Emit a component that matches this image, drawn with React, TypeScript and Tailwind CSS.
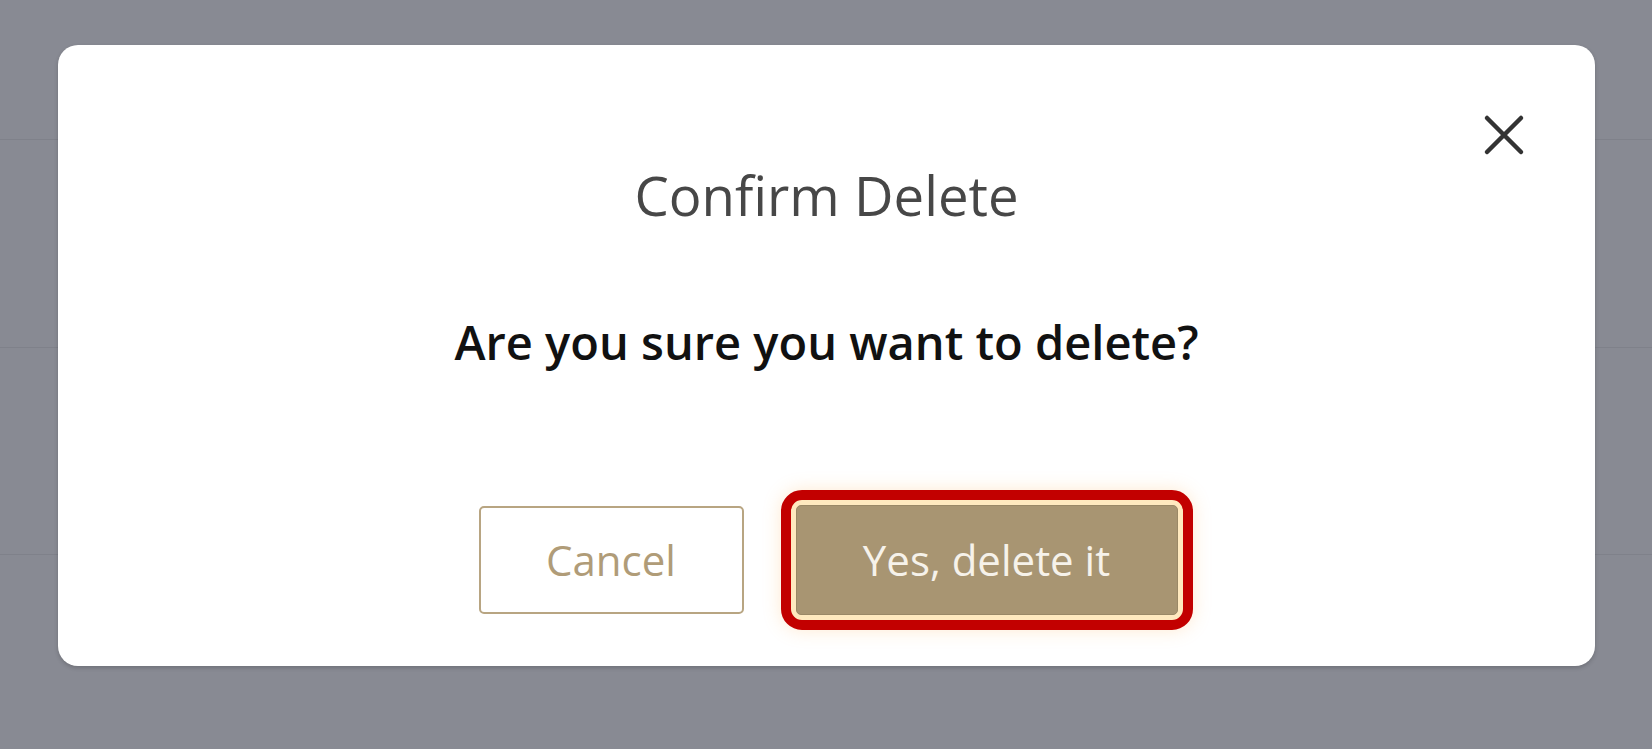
import { useState } from "react";

const rows = ["h-[140px]", "h-[208px]", "h-[207px]"];

function CloseIcon() {
  return (
    <svg width="42" height="42" viewBox="0 0 42 42" fill="none" aria-hidden="true">
      <path d="M4 4L38 38M38 4L4 38" stroke="#333333" strokeWidth="4.5" strokeLinecap="round" />
    </svg>
  );
}

export default function App() {
  const [open, setOpen] = useState(true);

  return (
    <div className="relative h-[749px] w-full overflow-hidden bg-[#888a93] font-['Open_Sans',sans-serif]">
      {/* table rows dimmed behind the backdrop */}
      <div className="flex flex-col">
        {rows.map((h, i) => (
          <div key={i} className={`${h} border-b border-[#7f818a]`} />
        ))}
      </div>

      {open ? (
        <div className="absolute left-[58px] top-[45px] flex h-[621px] w-[1537px] flex-col items-center rounded-[20px] bg-white shadow-[0_2px_4px_rgba(0,0,0,0.18)]">
          <button
            type="button"
            aria-label="Close"
            className="absolute right-[70px] top-[69px] flex h-[42px] w-[42px] items-center justify-center"
            onClick={() => setOpen(false)}
          >
            <CloseIcon />
          </button>

          <h2 className="pt-[123px] text-[54.5px] font-normal leading-none text-[#474747]">Confirm Delete</h2>

          <p className="mt-[96px] text-[47px] font-semibold leading-none text-[#111111]">
            Are you sure you want to delete?
          </p>

          <div className="ml-[18px] mt-[124px] flex items-center gap-[37px]">
            <button
              type="button"
              className="flex h-[108px] w-[265px] items-center justify-center rounded-[5px] border-2 border-[#b8a582] bg-white text-[42px] leading-none text-[#b09c78]"
              onClick={() => setOpen(false)}
            >
              Cancel
            </button>

            <div className="rounded-[21px] border-[10px] border-[#c20000] bg-[#ffe9bf] p-[5px] shadow-[0_0_18px_rgba(255,170,70,0.25)]">
              <button
                type="button"
                className="flex h-[110px] w-[382px] items-center justify-center rounded-[5px] border border-[#9a8866] bg-[#a89572] text-[42px] font-medium leading-none text-[#f6f2ea]"
                onClick={() => setOpen(false)}
              >
                Yes, delete it
              </button>
            </div>
          </div>
        </div>
      ) : null}
    </div>
  );
}
